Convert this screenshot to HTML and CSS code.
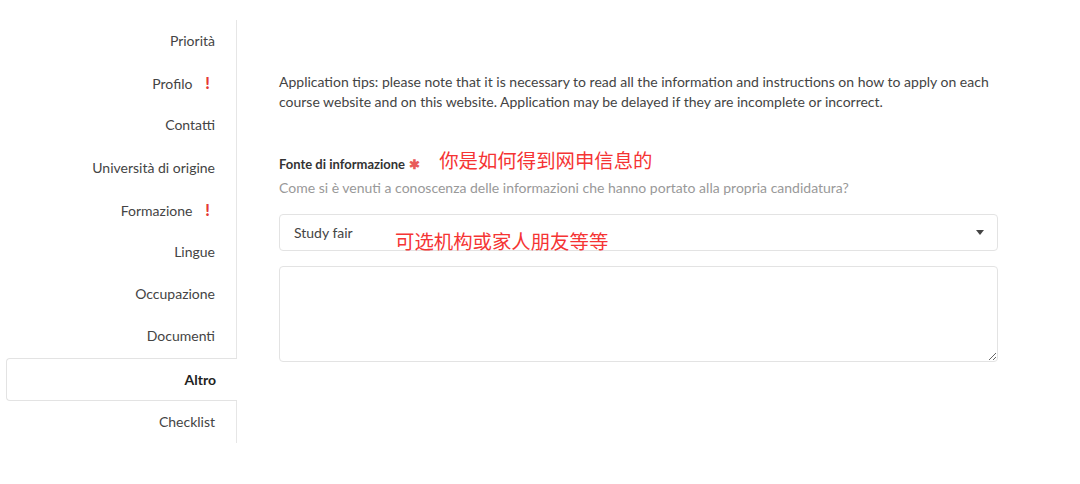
FILE: index.html
```html
<!DOCTYPE html>
<html lang="it">
<head>
    <meta charset="UTF-8">
    <meta name="viewport" content="width=device-width, initial-scale=1.0">
    <title>Altro</title>
    <link rel="stylesheet" href="styles.css">
</head>
<body>
    <div class="page">
        <ul class="steps">
            <li>Priorità</li>
            <li>Profilo <span class="alert">!</span></li>
            <li>Contatti</li>
            <li>Università di origine</li>
            <li>Formazione <span class="alert">!</span></li>
            <li>Lingue</li>
            <li>Occupazione</li>
            <li>Documenti</li>
            <li class="active">Altro</li>
            <li>Checklist</li>
        </ul>

        <div class="content">
            <p class="tips">Application tips: please note that it is necessary to read all the information and instructions on how to apply on each course website and on this website. Application may be delayed if they are incomplete or incorrect.</p>

            <div class="field">
                <label class="field-label">Fonte di informazione <span class="required">&#10033;</span><span class="note note-inline">你是如何得到网申信息的</span></label>
                <div class="help">Come si è venuti a conoscenza delle informazioni che hanno portato alla propria candidatura?</div>

                <div class="select-wrap">
                    <div class="select">
                        <span>Study fair</span>
                        <span class="caret"></span>
                    </div>
                    <span class="note note-over">可选机构或家人朋友等等</span>
                </div>

                <textarea class="textarea"></textarea>
            </div>
        </div>
    </div>
</body>
</html>
```

FILE: styles.css
```css
body {
    margin: 0;
    background-color: #fff;
    font-family: Lato, "Noto Sans", sans-serif;
    color: #444;
}

.page {
    display: flex;
    align-items: flex-start;
    padding-top: 20px;
}

.steps {
    list-style: none;
    margin: 0;
    padding: 0;
    width: 236px;
    border-right: 1px solid #e6e6e6;
}

.steps li {
    height: 42.2px;
    line-height: 42px;
    padding-right: 21px;
    text-align: right;
    font-size: 14px;
    color: #444;
    box-sizing: border-box;
}

.steps .alert {
    display: inline-block;
    width: 5px;
    margin-left: 9px;
    margin-right: 5px;
    text-align: center;
    color: #e53935;
    font-weight: 900;
    font-size: 16px;
}

.steps .active {
    height: 43px;
    margin-left: 6px;
    margin-right: -1px;
    background-color: #fff;
    border: 1px solid #e3e3e3;
    border-right: none;
    border-radius: 4px 0 0 4px;
    line-height: 41px;
    padding-right: 21px;
    font-weight: bold;
    color: #222;
}

.content {
    margin-left: 42px;
    width: 719px;
    padding-top: 52px;
}

.tips {
    margin: 0;
    font-size: 14px;
    line-height: 20px;
    color: #444;
}

.field {
    margin-top: 38px;
}

.field-label {
    display: block;
    font-size: 13px;
    font-weight: bold;
    color: #333;
    line-height: 22px;
}

.required {
    color: #e85a5a;
    font-size: 13px;
    margin-left: 1px;
}

.note {
    font-family: "Noto Sans CJK SC", sans-serif;
    font-size: 19.4px;
    font-weight: normal;
    color: #f53434;
}

.note-inline {
    margin-left: 19px;
    position: relative;
    top: -1px;
}

.help {
    margin-top: 3px;
    font-size: 14px;
    line-height: 20px;
    color: #999;
}

.select-wrap {
    position: relative;
    margin-top: 16px;
}

.select {
    display: flex;
    justify-content: space-between;
    align-items: center;
    height: 37px;
    padding: 0 13px 0 14px;
    border: 1px solid #e3e3e3;
    border-radius: 4px;
    box-sizing: border-box;
    font-size: 14px;
    color: #444;
}

.caret {
    width: 0;
    height: 0;
    border-left: 4px solid transparent;
    border-right: 4px solid transparent;
    border-top: 5px solid #444;
}

.note-over {
    position: absolute;
    left: 116px;
    top: 12px;
}

.textarea {
    display: block;
    width: 100%;
    height: 96px;
    margin-top: 15px;
    border: 1px solid #e3e3e3;
    border-radius: 4px;
    box-sizing: border-box;
    resize: vertical;
    font-family: Lato, sans-serif;
}
```
